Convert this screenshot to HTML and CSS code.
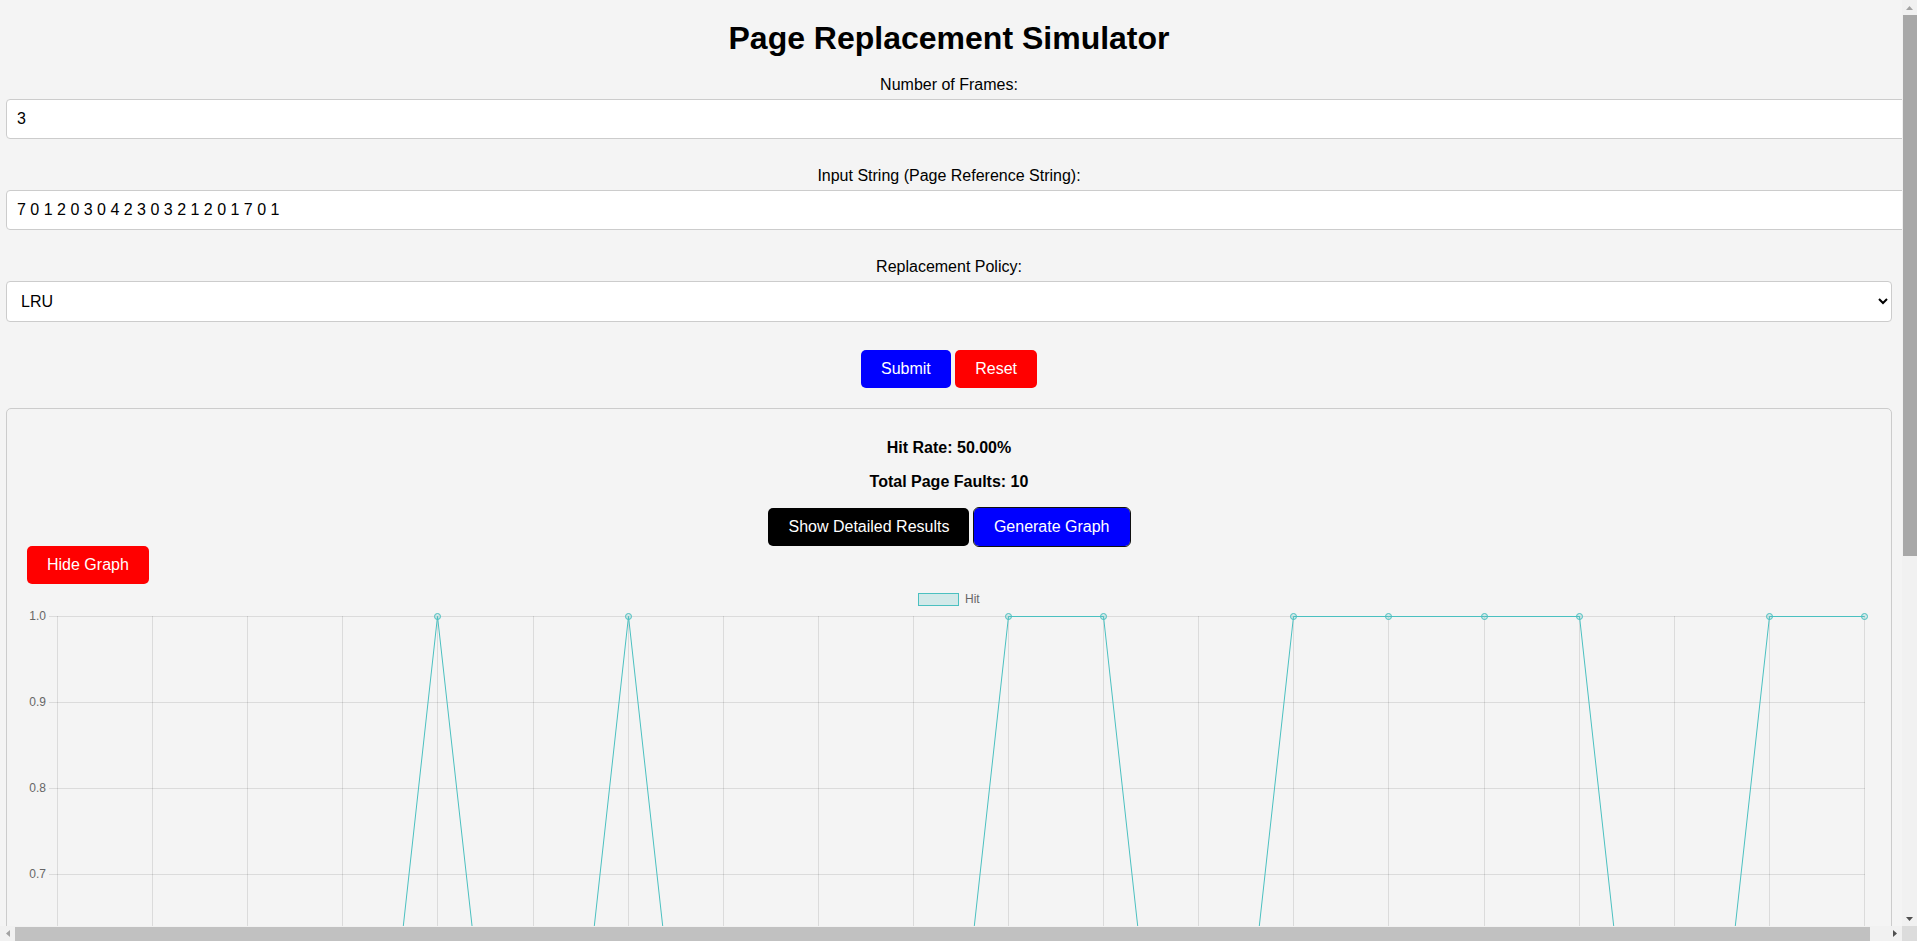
FILE: index.html
```html
<!DOCTYPE html>
<html lang="en">
<head>
<meta charset="UTF-8">
<title>Page Replacement Simulator</title>
<link rel="stylesheet" href="styles.css">
</head>
<body>
<div class="frame">
  <div class="viewport">
    <div class="container">
      <h1 class="title">Page Replacement Simulator</h1>
      <form class="sim-form">
        <label class="field-label" for="frames">Number of Frames:</label>
        <input class="field" type="text" id="frames" value="3">
        <label class="field-label" for="ref">Input String (Page Reference String):</label>
        <input class="field" type="text" id="ref" value="7 0 1 2 0 3 0 4 2 3 0 3 2 1 2 0 1 7 0 1">
        <label class="field-label" for="policy">Replacement Policy:</label>
        <select class="field field-select" id="policy">
          <option>LRU</option>
          <option>FIFO</option>
          <option>Optimal</option>
        </select>
        <div class="actions">
          <button type="button" class="btn btn-blue">Submit</button>
          <button type="button" class="btn btn-red">Reset</button>
        </div>
      </form>

      <div class="results">
        <p class="stat stat-first"><strong>Hit Rate: 50.00%</strong></p>
        <p class="stat"><strong>Total Page Faults: 10</strong></p>
        <div class="result-actions">
          <button type="button" class="btn btn-black">Show Detailed Results</button>
          <button type="button" class="btn btn-blue btn-ring">Generate Graph</button>
        </div>
        <button type="button" class="btn btn-red btn-hide">Hide Graph</button>
        <div class="chart">
          <svg class="chart-svg" viewBox="0 0 1844 922" xmlns="http://www.w3.org/2000/svg">
            <g stroke="rgba(0,0,0,0.1)" stroke-width="1" shape-rendering="crispEdges">
              <line x1="30.5" y1="32" x2="30.5" y2="900"/>
              <line x1="125.5" y1="32" x2="125.5" y2="900"/>
              <line x1="220.5" y1="32" x2="220.5" y2="900"/>
              <line x1="315.5" y1="32" x2="315.5" y2="900"/>
              <line x1="410.5" y1="32" x2="410.5" y2="900"/>
              <line x1="506.5" y1="32" x2="506.5" y2="900"/>
              <line x1="601.5" y1="32" x2="601.5" y2="900"/>
              <line x1="696.5" y1="32" x2="696.5" y2="900"/>
              <line x1="791.5" y1="32" x2="791.5" y2="900"/>
              <line x1="886.5" y1="32" x2="886.5" y2="900"/>
              <line x1="981.5" y1="32" x2="981.5" y2="900"/>
              <line x1="1076.5" y1="32" x2="1076.5" y2="900"/>
              <line x1="1171.5" y1="32" x2="1171.5" y2="900"/>
              <line x1="1266.5" y1="32" x2="1266.5" y2="900"/>
              <line x1="1361.5" y1="32" x2="1361.5" y2="900"/>
              <line x1="1457.5" y1="32" x2="1457.5" y2="900"/>
              <line x1="1552.5" y1="32" x2="1552.5" y2="900"/>
              <line x1="1647.5" y1="32" x2="1647.5" y2="900"/>
              <line x1="1742.5" y1="32" x2="1742.5" y2="900"/>
              <line x1="1837.5" y1="32" x2="1837.5" y2="900"/>
              <line x1="22" y1="32.5" x2="1838" y2="32.5"/>
              <line x1="22" y1="118.5" x2="1838" y2="118.5"/>
              <line x1="22" y1="204.5" x2="1838" y2="204.5"/>
              <line x1="22" y1="290.5" x2="1838" y2="290.5"/>
              <line x1="22" y1="376.5" x2="1838" y2="376.5"/>
              <line x1="22" y1="462.5" x2="1838" y2="462.5"/>
              <line x1="22" y1="548.5" x2="1838" y2="548.5"/>
              <line x1="22" y1="634.5" x2="1838" y2="634.5"/>
              <line x1="22" y1="720.5" x2="1838" y2="720.5"/>
              <line x1="22" y1="806.5" x2="1838" y2="806.5"/>
              <line x1="22" y1="892.5" x2="1838" y2="892.5"/>
            </g>
            <g class="axis-label" text-anchor="end" dominant-baseline="middle">
              <text x="19" y="33">1.0</text>
              <text x="19" y="119">0.9</text>
              <text x="19" y="205">0.8</text>
              <text x="19" y="291">0.7</text>
              <text x="19" y="377">0.6</text>
              <text x="19" y="463">0.5</text>
              <text x="19" y="549">0.4</text>
              <text x="19" y="635">0.3</text>
              <text x="19" y="721">0.2</text>
              <text x="19" y="807">0.1</text>
              <text x="19" y="893">0.0</text>
            </g>
            <g class="axis-label" text-anchor="middle">
              <text x="30.5" y="914">1</text>
              <text x="125.5" y="914">2</text>
              <text x="220.5" y="914">3</text>
              <text x="315.5" y="914">4</text>
              <text x="410.5" y="914">5</text>
              <text x="506.5" y="914">6</text>
              <text x="601.5" y="914">7</text>
              <text x="696.5" y="914">8</text>
              <text x="791.5" y="914">9</text>
              <text x="886.5" y="914">10</text>
              <text x="981.5" y="914">11</text>
              <text x="1076.5" y="914">12</text>
              <text x="1171.5" y="914">13</text>
              <text x="1266.5" y="914">14</text>
              <text x="1361.5" y="914">15</text>
              <text x="1457.5" y="914">16</text>
              <text x="1552.5" y="914">17</text>
              <text x="1647.5" y="914">18</text>
              <text x="1742.5" y="914">19</text>
              <text x="1837.5" y="914">20</text>
            </g>
            <rect x="891.5" y="9.5" width="40" height="12" fill="rgba(75,192,192,0.2)" stroke="rgb(75,192,192)" stroke-width="1"/>
            <text class="legend-label" x="938" y="16" dominant-baseline="middle">Hit</text>
            <polyline fill="none" stroke="rgb(75,192,192)" stroke-width="1" points="30.5,892.5 125.5,892.5 220.5,892.5 315.5,892.5 410.5,32.5 506.5,892.5 601.5,32.5 696.5,892.5 791.5,892.5 886.5,892.5 981.5,32.5 1076.5,32.5 1171.5,892.5 1266.5,32.5 1361.5,32.5 1457.5,32.5 1552.5,32.5 1647.5,892.5 1742.5,32.5 1837.5,32.5"/>
            <g fill="rgba(75,192,192,0.2)" stroke="rgb(75,192,192)" stroke-width="1">
              <circle cx="30.5" cy="892.5" r="3"/>
              <circle cx="125.5" cy="892.5" r="3"/>
              <circle cx="220.5" cy="892.5" r="3"/>
              <circle cx="315.5" cy="892.5" r="3"/>
              <circle cx="410.5" cy="32.5" r="3"/>
              <circle cx="506.5" cy="892.5" r="3"/>
              <circle cx="601.5" cy="32.5" r="3"/>
              <circle cx="696.5" cy="892.5" r="3"/>
              <circle cx="791.5" cy="892.5" r="3"/>
              <circle cx="886.5" cy="892.5" r="3"/>
              <circle cx="981.5" cy="32.5" r="3"/>
              <circle cx="1076.5" cy="32.5" r="3"/>
              <circle cx="1171.5" cy="892.5" r="3"/>
              <circle cx="1266.5" cy="32.5" r="3"/>
              <circle cx="1361.5" cy="32.5" r="3"/>
              <circle cx="1457.5" cy="32.5" r="3"/>
              <circle cx="1552.5" cy="32.5" r="3"/>
              <circle cx="1647.5" cy="892.5" r="3"/>
              <circle cx="1742.5" cy="32.5" r="3"/>
              <circle cx="1837.5" cy="32.5" r="3"/>
            </g>
          </svg>
        </div>
      </div>
    </div>
  </div>

  <div class="vbar" aria-hidden="true">
    <div class="sb-btn"><svg width="7" height="4" viewBox="0 0 7 4"><path d="M0 4 L3.5 0 L7 4 Z" fill="#a3a3a3"/></svg></div>
    <div class="vbar-thumb"></div>
    <div class="sb-track"></div>
    <div class="sb-btn"><svg width="7" height="4" viewBox="0 0 7 4"><path d="M0 0 L7 0 L3.5 4 Z" fill="#505050"/></svg></div>
  </div>
  <div class="hbar" aria-hidden="true">
    <div class="sb-btn"><svg width="4" height="7" viewBox="0 0 4 7"><path d="M4 0 L4 7 L0 3.5 Z" fill="#a3a3a3"/></svg></div>
    <div class="hbar-thumb"></div>
    <div class="sb-track"></div>
    <div class="sb-btn"><svg width="4" height="7" viewBox="0 0 4 7"><path d="M0 0 L4 3.5 L0 7 Z" fill="#505050"/></svg></div>
  </div>
  <div class="sb-corner"></div>
</div>
</body>
</html>
```

FILE: styles.css
```css
html, body {
  height: 100%;
}

body {
  margin: 0;
  overflow: hidden;
  background: #f4f4f4;
  font-family: "Liberation Sans", Arial, sans-serif;
  color: #000;
}

.frame {
  display: grid;
  grid-template-columns: 1fr 15px;
  grid-template-rows: 1fr 15px;
  height: 100vh;
}

.viewport {
  overflow: hidden;
  min-width: 0;
  min-height: 0;
}

.container {
  margin: 0 10px 0 6px;
}

.title {
  font-size: 32px;
  font-weight: bold;
  text-align: center;
  margin: 19.5px 0 19px;
}

.sim-form {
  margin: 0;
}

.field-label {
  display: block;
  text-align: center;
  font-size: 16px;
  margin-bottom: 5px;
}

.field {
  display: block;
  width: 100%;
  padding: 10px;
  margin: 0 0 28px;
  border: 1px solid #ccc;
  border-radius: 4px;
  background: #fff;
  color: #000;
  font-family: "Liberation Sans", Arial, sans-serif;
  font-size: 16px;
}

.field-select {
  box-sizing: border-box;
  margin-bottom: 0;
}

.actions {
  text-align: center;
  margin: 28px 0 20px;
}

.btn {
  font-family: "Liberation Sans", Arial, sans-serif;
  font-size: 16px;
  color: #fff;
  border: none;
  border-radius: 5px;
  padding: 10px 20px;
  cursor: pointer;
}

.btn-blue {
  background: #0000ff;
}

.btn-red {
  background: #ff0000;
}

.btn-black {
  background: #000;
}

.btn-ring {
  outline: 1px solid #101010;
}

.results {
  border: 1px solid #ccc;
  border-radius: 5px;
  padding: 20px;
}

.stat {
  text-align: center;
  font-size: 16px;
  margin: 16px 0;
}

.stat-first {
  margin-top: 10px;
}

.result-actions {
  text-align: center;
  padding-top: 1px;
}

.btn-hide {
  display: block;
}

.chart-svg {
  display: block;
  width: 100%;
  height: auto;
}

.axis-label {
  font-family: "Liberation Sans", Arial, sans-serif;
  font-size: 12px;
  fill: #666;
}

.legend-label {
  font-family: "Liberation Sans", Arial, sans-serif;
  font-size: 12px;
  fill: #666;
}

/* scrollbars of the captured window */
.vbar {
  display: flex;
  flex-direction: column;
  background: #f1f1f1;
}

.hbar {
  display: flex;
  background: #f1f1f1;
}

.sb-btn {
  flex: 0 0 15px;
  display: flex;
  align-items: center;
  justify-content: center;
}

.sb-track {
  flex: 1;
}

.vbar-thumb {
  flex: 0 0 541px;
  margin-left: 1px;
  background: #a8a8a8;
}

.hbar-thumb {
  flex: 0 0 1855px;
  margin-top: 1px;
  background: #c1c1c1;
}

.sb-corner {
  background: #dcdcdc;
}
```
